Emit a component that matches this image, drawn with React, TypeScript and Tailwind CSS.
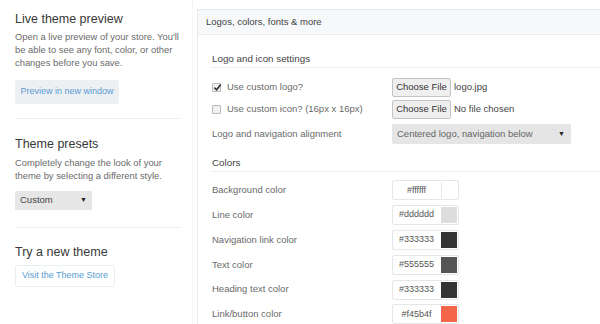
import { ReactNode } from 'react';

const colors = [
  { label: 'Background color', value: '#ffffff', swatch: '#ffffff' },
  { label: 'Line color', value: '#dddddd', swatch: '#dddddd' },
  { label: 'Navigation link color', value: '#333333', swatch: '#333333' },
  { label: 'Text color', value: '#555555', swatch: '#555555' },
  { label: 'Heading text color', value: '#333333', swatch: '#333333' },
  { label: 'Link/button color', value: '#f45b4f', swatch: '#f4664a' },
];

const Caret = () => <span className="text-[7px] text-[#222]">▼</span>;

const Divider = () => <div className="h-px bg-[#ececec]" />;

const Checkbox = ({ checked }: { checked?: boolean }) => (
  <span className="relative inline-block w-[9px] h-[9px] border border-[#b9b9b9] bg-[#f2f2f2] rounded-[1px]">
    {checked && (
      <svg viewBox="0 0 10 10" className="absolute -top-[1px] left-0 w-[9px] h-[9px]">
        <path d="M1.5 5.2 L4 7.6 L8.6 1.6" fill="none" stroke="#333" strokeWidth="1.8" />
      </svg>
    )}
  </span>
);

const FileInput = ({ name }: { name: string }) => (
  <div className="flex items-center gap-[3px]">
    <div className="h-[19px] w-[59px] flex items-center justify-center bg-[#efefef] border border-[#c4c4c4] rounded-[2px] text-[9.5px] text-[#333]">
      Choose File
    </div>
    <span className="text-[9.5px] text-[#444]">{name}</span>
  </div>
);

const Row = ({ label, children, className = '' }: { label: ReactNode; children: ReactNode; className?: string }) => (
  <div className={`flex items-center ${className}`}>
    <div className="w-[180px] flex items-center text-[9.5px] text-[#6a6a6a]">{label}</div>
    <div className="flex-1">{children}</div>
  </div>
);

export default function App() {
  return (
    <div
      className="w-[600px] h-[324px] overflow-hidden bg-white flex"
      style={{ fontFamily: '"Liberation Sans", Arial, sans-serif' }}
    >
      {/* left sidebar */}
      <div className="w-[193px] shrink-0 border-r border-[#f5f5f5] pl-[15px] pr-[12px] pt-[11px]">
        <h2 className="text-[12.5px] leading-[16px] text-[#383838]">Live theme preview</h2>
        <p className="mt-[3px] text-[9.4px] leading-[13px] text-[#6b6b6b]">
          Open a live preview of your store. You'll be able to see any font, color, or other changes before you save.
        </p>
        <div className="mt-[11px] h-[24px] w-[104px] flex items-center justify-center bg-[#edf0f3] rounded-[2px] text-[9px] text-[#5c9bd3]">
          Preview in new window
        </div>
        <div className="mt-[14px]">
          <Divider />
        </div>
        <h2 className="mt-[17px] text-[12.5px] leading-[16px] text-[#383838]">Theme presets</h2>
        <p className="mt-[4px] text-[9.4px] leading-[13px] text-[#6b6b6b]">
          Completely change the look of your theme by selecting a different style.
        </p>
        <div className="mt-[9px] h-[19px] w-[77px] flex items-center justify-between px-[5px] bg-[#e6e6e6] rounded-[1px] text-[9.5px] text-[#444]">
          <span>Custom</span>
          <Caret />
        </div>
        <div className="mt-[17px]">
          <Divider />
        </div>
        <h2 className="mt-[16px] text-[12.5px] leading-[16px] text-[#383838]">Try a new theme</h2>
        <div className="mt-[5px] h-[22px] w-[100px] flex items-center justify-center bg-white border border-[#e8edf2] rounded-[2px] text-[9px] text-[#5c9bd3]">
          Visit the Theme Store
        </div>
      </div>

      {/* right panel */}
      <div className="flex-1 ml-[4px] mt-[9px] border-l border-t border-[#e6e8eb]">
        <div className="h-[25px] flex items-center pl-[8px] bg-[#f6f8fa] border-b border-[#eaedf0] text-[9.5px] text-[#444]">
          Logos, colors, fonts &amp; more
        </div>
        <div className="pl-[14px]">
          <div className="mt-[16px] h-[16px] flex items-center text-[9.8px] text-[#444] border-b border-[#eceeef] box-content">
            Logo and icon settings
          </div>
          <Row
            className="mt-[8px] h-[22px]"
            label={
              <>
                <Checkbox checked />
                <span className="ml-[6px]">Use custom logo?</span>
              </>
            }
          >
            <FileInput name="logo.jpg" />
          </Row>
          <Row
            className="h-[22px]"
            label={
              <>
                <Checkbox />
                <span className="ml-[6px]">Use custom icon? (16px x 16px)</span>
              </>
            }
          >
            <FileInput name="No file chosen" />
          </Row>
          <Row className="mt-[3px] h-[22px]" label="Logo and navigation alignment">
            <div className="h-[20px] w-[179px] flex items-center justify-between pl-[5px] pr-[6px] bg-[#e5e5e5] rounded-[2px] text-[9.5px] text-[#666]">
              <span>Centered logo, navigation below</span>
              <Caret />
            </div>
          </Row>
          <div className="mt-[10px] h-[16px] flex items-center text-[9.8px] text-[#444] border-b border-[#eceeef] box-content">
            Colors
          </div>
          <div className="mt-[6px]">
            {colors.map((c) => (
              <Row key={c.label} className="h-[24.8px]" label={c.label}>
                <div className="h-[20px] w-[67px] flex border border-[#e6e6e6] rounded-[2px] bg-white">
                  <div className="flex-1 flex items-center justify-center text-[9px] text-[#555]">{c.value}</div>
                  <div
                    className={`w-[16px] m-px ${c.swatch === '#ffffff' ? 'border-l border-[#e6e6e6]' : ''}`}
                    style={{ backgroundColor: c.swatch }}
                  />
                </div>
              </Row>
            ))}
          </div>
        </div>
      </div>
    </div>
  );
}
